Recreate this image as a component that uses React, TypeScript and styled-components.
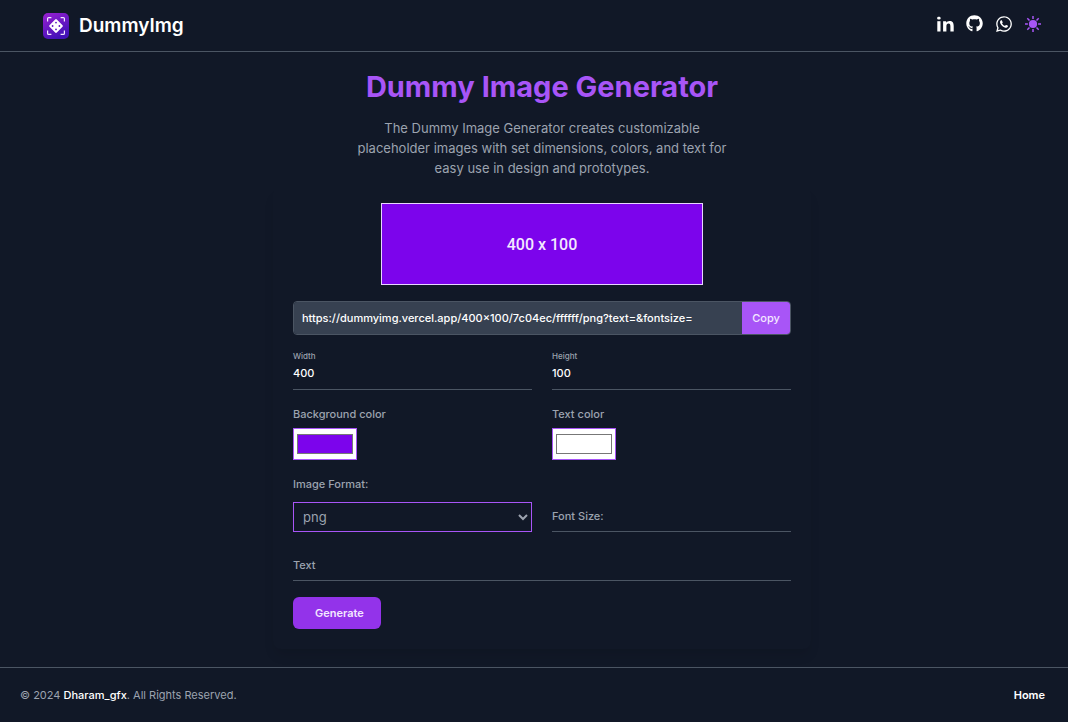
import React, { useState } from "react";
import styled, { createGlobalStyle } from "styled-components";
import { FaGithub, FaWhatsapp } from "react-icons/fa";

const colors = {
  page: "#111827",
  line: "#4b5563",
  muted: "#9ca3af",
  text: "#ffffff",
  accent: "#a855f7",
  button: "#9333ea",
  field: "#374151",
};

const GlobalStyle = createGlobalStyle`
  *, *::before, *::after { box-sizing: border-box; }
  body {
    margin: 0;
    background: ${colors.page};
    color: ${colors.muted};
    font-family: Inter, "Liberation Sans", sans-serif;
    font-size: 11px;
    line-height: 16px;
  }
  button, input, select { font-family: inherit; margin: 0; }
  a { color: inherit; text-decoration: none; }
`;

const Page = styled.div`
  min-height: 100vh;
  display: flex;
  flex-direction: column;
`;

const Header = styled.header`
  display: flex;
  justify-content: space-between;
  align-items: center;
  height: 52px;
  padding: 0 27px 0 43px;
  border-bottom: 1px solid ${colors.line};
`;

const Brand = styled.a`
  display: flex;
  align-items: center;
  gap: 10px;
  color: ${colors.text};
  font-size: 19px;
  line-height: 24px;
  font-weight: 600;
`;

const IconNav = styled.nav`
  display: flex;
  align-items: center;
  gap: 12px;
  padding-bottom: 4px;
  color: ${colors.text};
`;

const IconLink = styled.a<{ $size: number }>`
  display: flex;
  font-size: ${(p) => p.$size}px;
`;

const ThemeButton = styled.button`
  display: flex;
  padding: 0;
  border: 0;
  background: none;
  color: ${colors.accent};
  cursor: pointer;
`;

const Main = styled.main`
  flex: 1;
  display: flex;
  flex-direction: column;
  align-items: center;
  padding: 16px 0 18px 16px;
`;

const Title = styled.h1`
  margin: 0;
  color: ${colors.accent};
  font-size: 29px;
  line-height: 38px;
  font-weight: 700;
  text-align: center;
`;

const Intro = styled.p`
  max-width: 380px;
  margin: 12px 0 10px;
  font-size: 13px;
  line-height: 20px;
  text-align: center;
`;

const Card = styled.form`
  width: 100%;
  max-width: 538px;
  padding: 15px 20px 20px;
  border-radius: 8px;
  box-shadow: 0 8px 12px -2px rgba(0, 0, 0, 0.1);
  display: flex;
  flex-direction: column;
`;

const Preview = styled.div`
  align-self: center;
  width: 322px;
  max-width: 100%;
  height: 82px;
  display: flex;
  align-items: center;
  justify-content: center;
  padding-top: 2px;
  border: 1px solid #e9d5ff;
  background: #7c04ec;
  color: #f3e8ff;
  font-family: Roboto, sans-serif;
  font-size: 16px;
  font-weight: 500;
`;

const UrlBar = styled.div`
  display: flex;
  height: 34px;
  margin: 16px 0;
  border: 1px solid ${colors.line};
  border-radius: 4px;
  overflow: hidden;
`;

const UrlInput = styled.input`
  flex: 1;
  min-width: 0;
  padding: 0 8px;
  border: 0;
  background: ${colors.field};
  color: ${colors.text};
  font-size: 11px;
  font-weight: 500;
`;

const CopyButton = styled.button`
  width: 48px;
  padding: 0;
  border: 0;
  background: ${colors.accent};
  color: #f3e8ff;
  font-size: 11px;
  font-weight: 500;
  cursor: pointer;
`;

const Columns = styled.div`
  display: grid;
  grid-template-columns: 1fr 1fr;
  column-gap: 20px;
`;

const FloatField = styled.div<{ $tall?: boolean }>`
  display: grid;
  align-self: end;
  height: ${(p) => (p.$tall ? "39px" : "30px")};
`;

const FloatLabel = styled.label<{ $filled?: boolean }>`
  grid-area: 1 / 1;
  align-self: ${(p) => (p.$filled ? "start" : "center")};
  padding-bottom: ${(p) => (p.$filled ? "0" : "2px")};
  font-size: ${(p) => (p.$filled ? "8px" : "11px")};
  line-height: ${(p) => (p.$filled ? "10px" : "16px")};
  font-weight: 500;
  pointer-events: none;
`;

const LineInput = styled.input<{ $filled?: boolean }>`
  grid-area: 1 / 1;
  width: 100%;
  min-width: 0;
  padding: ${(p) => (p.$filled ? "6px 0 0" : "0")};
  border: 0;
  border-bottom: 1px solid ${colors.line};
  border-radius: 0;
  background: transparent;
  color: ${colors.text};
  font-size: 11px;
  font-weight: 500;
`;

const Stack = styled.div`
  display: flex;
  flex-direction: column;
  align-items: flex-start;
`;

const Label = styled.label`
  font-size: 11px;
  line-height: 16px;
  font-weight: 500;
`;

const ColorRow = styled(Columns)`
  margin: 16px 0;
  ${Label} { margin-bottom: 6px; }
`;

const ColorInput = styled.input`
  width: 64px;
  height: 32px;
  padding: 1px;
  border: 1px solid ${colors.accent};
  border-radius: 0;
  background: #ffffff;
`;

const FormatSelect = styled.select`
  width: 100%;
  height: 30px;
  margin-top: 10px;
  padding: 0 0 0 5px;
  border: 1px solid ${colors.accent};
  border-radius: 0;
  background: ${colors.page};
  color: ${colors.muted};
  font-size: 13px;
`;

const TextRow = styled.div`
  margin: 19px 0 16px;
`;

const GenerateButton = styled.button`
  align-self: flex-start;
  height: 32px;
  padding: 0 17px 0 22px;
  border: 0;
  border-radius: 6px;
  background: ${colors.button};
  color: #f3e8ff;
  font-size: 11px;
  font-weight: 600;
  cursor: pointer;
`;

const Footer = styled.footer`
  display: flex;
  justify-content: space-between;
  align-items: center;
  height: 55px;
  padding: 0 23px 0 20px;
  border-top: 1px solid ${colors.line};
`;

const FooterLink = styled.a<{ $bold?: boolean }>`
  color: ${colors.text};
  font-weight: ${(p) => (p.$bold ? 600 : 500)};
`;

function Logo() {
  return (
    <svg width="26" height="26" viewBox="0 0 26 26" aria-hidden="true">
      <defs>
        <linearGradient id="logo-fill" x1="0" y1="0" x2="0.5" y2="1">
          <stop offset="0" stopColor="#9b20d0" />
          <stop offset="1" stopColor="#4312b8" />
        </linearGradient>
      </defs>
      <rect width="26" height="26" rx="5" fill="url(#logo-fill)" />
      <path
        d="M4.6 8.4V5.6q0-1 1-1h2.8M17.6 4.6h2.8q1 0 1 1v2.8M21.4 17.6v2.8q0 1-1 1h-2.8M8.4 21.4H5.6q-1 0-1-1v-2.8"
        fill="none"
        stroke="#f3e8ff"
        strokeWidth="1.2"
      />
      <rect x="7.8" y="7.8" width="10.4" height="10.4" rx="1.2" fill="#fff" transform="rotate(45 13 13)" />
      <g fill="#5b16c0">
        <circle cx="13" cy="9.6" r="0.9" />
        <circle cx="16.4" cy="13" r="0.9" />
        <circle cx="13" cy="16.4" r="0.9" />
        <circle cx="9.6" cy="13" r="0.9" />
      </g>
    </svg>
  );
}

function LinkedInIcon() {
  return (
    <svg width="17" height="16" viewBox="0 0 17 16" fill="currentColor" aria-hidden="true">
      <rect x="0.2" y="0.8" width="3.4" height="2.8" rx="1.3" />
      <rect x="0.3" y="5.2" width="3.2" height="10.3" />
      <path d="M6.1 5.2h3.1v1.5C9.8 5.6 11 4.9 12.5 4.9c3.1 0 4.2 1.9 4.2 5v5.6h-3.3v-5.1c0-1.7-.4-2.8-1.8-2.8-1.6 0-2.2 1.1-2.2 2.8v5.1H6.1z" />
    </svg>
  );
}

function SunIcon() {
  return (
    <svg width="16" height="16" viewBox="0 0 16 16" aria-hidden="true">
      <circle cx="8" cy="8" r="4.1" fill="currentColor" />
      <path
        d="M8 0v2.9M8 13.1V16M0 8h2.9M13.1 8H16M2.3 2.3l2.2 2.2M11.5 11.5l2.2 2.2M2.3 13.7l2.2-2.2M11.5 4.5l2.2-2.2"
        stroke="currentColor"
        strokeWidth="1.5"
      />
    </svg>
  );
}

interface LineFieldProps {
  id: string;
  label: string;
  initial?: string;
}

function LineField({ id, label, initial = "" }: LineFieldProps) {
  const [value, setValue] = useState(initial);
  const filled = value !== "";
  return (
    <FloatField $tall={initial !== ""}>
      <LineInput id={id} $filled={filled} value={value} onChange={(e) => setValue(e.target.value)} />
      <FloatLabel htmlFor={id} $filled={filled}>
        {label}
      </FloatLabel>
    </FloatField>
  );
}

export default function App() {
  return (
    <Page>
      <GlobalStyle />
      <Header>
        <Brand href="#">
          <Logo />
          DummyImg
        </Brand>
        <IconNav aria-label="Social">
          <IconLink $size={17} href="#" aria-label="LinkedIn"><LinkedInIcon /></IconLink>
          <IconLink $size={17} href="#" aria-label="GitHub"><FaGithub /></IconLink>
          <IconLink $size={18} href="#" aria-label="WhatsApp"><FaWhatsapp /></IconLink>
          <ThemeButton type="button" aria-label="Toggle theme"><SunIcon /></ThemeButton>
        </IconNav>
      </Header>

      <Main>
        <Title>Dummy Image Generator</Title>
        <Intro>
          The Dummy Image Generator creates customizable placeholder images with set
          dimensions, colors, and text for easy use in design and prototypes.
        </Intro>

        <Card onSubmit={(e) => e.preventDefault()}>
          <Preview>400 x 100</Preview>
          <UrlBar>
            <UrlInput
              aria-label="Image URL"
              readOnly
              value="https://dummyimg.vercel.app/400x100/7c04ec/ffffff/png?text=&fontsize="
            />
            <CopyButton type="button">Copy</CopyButton>
          </UrlBar>

          <Columns>
            <LineField id="width" label="Width" initial="400" />
            <LineField id="height" label="Height" initial="100" />
          </Columns>

          <ColorRow>
            <Stack>
              <Label htmlFor="bg">Background color</Label>
              <ColorInput id="bg" type="color" defaultValue="#7c04ec" />
            </Stack>
            <Stack>
              <Label htmlFor="fg">Text color</Label>
              <ColorInput id="fg" type="color" defaultValue="#ffffff" />
            </Stack>
          </ColorRow>

          <Columns>
            <Stack>
              <Label htmlFor="format">Image Format:</Label>
              <FormatSelect id="format" defaultValue="png">
                <option>png</option>
                <option>jpg</option>
                <option>webp</option>
              </FormatSelect>
            </Stack>
            <LineField id="fontsize" label="Font Size:" />
          </Columns>

          <TextRow>
            <LineField id="text" label="Text" />
          </TextRow>

          <GenerateButton type="submit">Generate</GenerateButton>
        </Card>
      </Main>

      <Footer>
        <span>
          © 2024 <FooterLink href="#">Dharam_gfx</FooterLink>. All Rights Reserved.
        </span>
        <FooterLink href="#" $bold>Home</FooterLink>
      </Footer>
    </Page>
  );
}
